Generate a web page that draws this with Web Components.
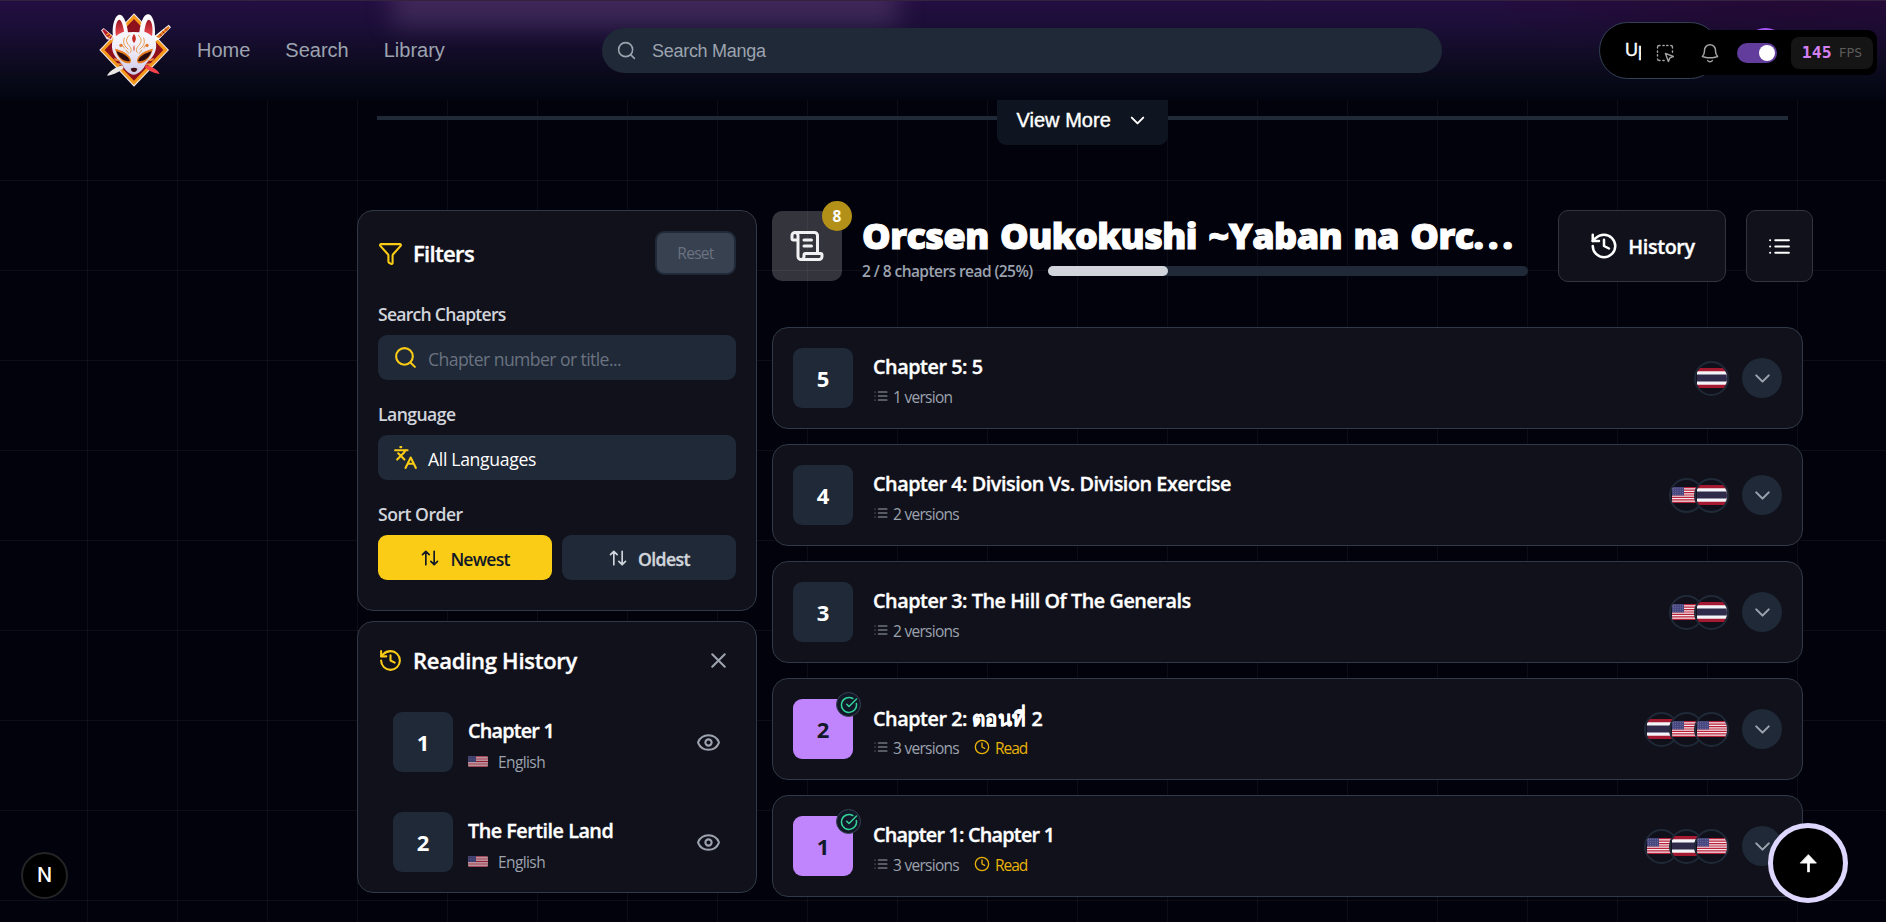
<!DOCTYPE html>
<html lang="en">
<head>
<meta charset="utf-8">
<title>Manga chapters</title>
<style>
  html, body { margin: 0; height: 100%; overflow: hidden; background: #02020d; }
  body { font-family: "Open Sans", "Noto Sans", sans-serif; color: #fff; }
</style>
</head>
<body>
<manga-page></manga-page>
<script>
const ICONS = {
  search: '<circle cx="11" cy="11" r="8"/><path d="m21 21-4.3-4.3"/>',
  down: '<path d="m6 9 6 6 6-6"/>',
  funnel: '<path d="M10 20a1 1 0 0 0 .553.895l2 1A1 1 0 0 0 14 21v-7a2 2 0 0 1 .517-1.341L21.74 4.67A1 1 0 0 0 21 3H3a1 1 0 0 0-.742 1.67l7.225 7.989A2 2 0 0 1 10 14z"/>',
  languages: '<path d="m5 8 6 6M4 14l6-6 2-3M2 5h12M7 2h1m14 20-5-10-5 10M14 18h6"/>',
  sort: '<path d="m21 16-4 4-4-4M17 20V4M3 8l4-4 4 4M7 4v16"/>',
  history: '<path d="M3 12a9 9 0 1 0 9-9 9.75 9.75 0 0 0-6.74 2.74L3 8"/><path d="M3 3v5h5M12 7v5l4 2"/>',
  close: '<path d="M18 6 6 18M6 6l12 12"/>',
  eye: '<path d="M2.062 12.348a1 1 0 0 1 0-.696 10.75 10.75 0 0 1 19.876 0 1 1 0 0 1 0 .696 10.75 10.75 0 0 1-19.876 0"/><circle cx="12" cy="12" r="3"/>',
  scroll: '<path d="M15 12h-5M15 8h-5M19 17V5a2 2 0 0 0-2-2H4M8 21h12a2 2 0 0 0 2-2v-1a1 1 0 0 0-1-1H11a1 1 0 0 0-1 1v1a2 2 0 1 1-4 0V5a2 2 0 1 0-4 0v2a1 1 0 0 0 1 1h3"/>',
  list: '<path d="M3 6h.01M3 12h.01M3 18h.01M8 6h13M8 12h13M8 18h13"/>',
  clock: '<circle cx="12" cy="12" r="10"/><path d="M12 6v6l4 2"/>',
  check: '<path d="M21.801 10A10 10 0 1 1 17 3.335"/><path d="m9 11 3 3L22 4"/>',
  top: '<path d="M12 1 22 11.500H2Z" fill="currentColor" stroke-width="1"/><path d="M12 8v15" stroke-width="3.400" stroke-linecap="butt"/>',
  bell: '<path d="M14.857 17.082a23.848 23.848 0 0 0 5.454-1.310A8.967 8.967 0 0 1 18 9.750V9A6 6 0 0 0 6 9v.75a8.967 8.967 0 0 1-2.312 6.022c1.733.640 3.560 1.085 5.455 1.310m5.714 0a24.255 24.255 0 0 1-5.714 0"/><path d="M9.500 20.300c1.200 1.700 3.800 1.700 5 0"/>',
  inspect: '<path d="M3 6V5a2 2 0 0 1 2-2h1M9.500 3h1.500M14 3h1.500M19 3a2 2 0 0 1 2 2v1M3 9.500V11M3 14v1.500M3 19a2 2 0 0 0 2 2h1M9.500 21H11M21 9.500V11"/><path d="m12.500 12.500 9.500 3.700-4.200 1.700-1.700 4.200z"/>'
};

const LOGO = `
<svg viewBox="0 0 252 252" width="84" height="84" aria-hidden="true">
  <defs>
    <linearGradient id="face" x1="0" y1="0" x2="0" y2="1"><stop offset="0" stop-color="#fff"/><stop offset=".55" stop-color="#f1eefa"/><stop offset="1" stop-color="#cfcbe8"/></linearGradient>
    <linearGradient id="ear" x1="0" y1="0" x2="0" y2="1"><stop offset="0" stop-color="#9c1522"/><stop offset="1" stop-color="#ef4a50"/></linearGradient>
  </defs>
  <path d="M120 16 225 126 120 236 16 126Z" fill="#f4e9f0"/>
  <path d="M120 20 221 126 120 231 20 126Z" fill="#f59a18"/>
  <path d="M120 33 208 126 120 218 32 126Z" fill="#8e101d"/>
  <path d="M21 67 29 60 58 84 54 97 38 94Z" fill="#f3dfe4"/>
  <path d="M25 67 30 63 54 85 50 94 36 84Z" fill="#b51a2c"/>
  <path d="m37 82 9-7M43 89l9-8" stroke="#f5a31e" stroke-width="4"/>
  <path d="m224 50 7 8-34 34-16 10-4-14Z" fill="#fff"/>
  <path d="m223 54 5 5-32 31-10-3Z" fill="#e47718"/>
  <path d="m213 62 6 6M205 70l6 6M197 78l6 6" stroke="#8e2414" stroke-width="3"/>
  <path d="M40 201c8-12 22-22 45-29l4 8c-12 10-28 20-49 23Z" fill="#e9e6e4"/>
  <path d="M197 198c-6-13-22-21-42-27l-2 7c11 10 23 17 44 20Z" fill="#f4434b"/>
  <path d="M58 92C53 65 58 37 68 25c7-9 17-5 23 8 6 11 9 26 11 40q17-2 34 0c2-16 6-34 13-45 6-10 16-13 23-4 10 14 13 41 10 68 8 18 5 36-5 52-9 13-17 17-23 27-5 12-15 22-25 26-7 4-13 4-20 0-10-4-18-14-24-26-6-10-15-15-22-27-10-16-12-35-5-52Z" fill="url(#face)"/>
  <path d="M66 84c-4-24 1-46 9-49 7-1 13 18 15 36-9 3-17 7-24 13ZM174 84c4-24 0-46-9-49-7-1-12 18-14 36 9 3 16 7 23 13Z" fill="url(#ear)"/>
  <g fill="none" stroke="#e5943c" stroke-width="2.800" stroke-linecap="round">
    <path d="M106 82c-16 14-6 25 1 33 5 6 6 12 3 18M133 82c16 14 6 25-1 33-5 6-6 12-3 18M91 90c-6 15 1 25 11 33M149 90c6 15-1 25-11 33"/>
    <path d="M81 116c6-5 9-1 9 4M159 116c-6-5-9-1-9 4M96 126l8 10M144 126l-8 10"/>
  </g>
  <path d="M120 78c8 11 7 18 0 27-7-9-8-16 0-27Z" fill="#c72a24"/><path d="M120 110c3 8 2 15 0 21-2-6-3-13 0-21Z" fill="#d8472b"/>
  <circle cx="81" cy="112" r="5" fill="#e0772d"/><circle cx="159" cy="112" r="5" fill="#e0772d"/>
  <path d="M63 122c18 4 41 14 47 30 2 7 1 10-3 14-15 1-35-9-44-44ZM177 122c-18 4-41 14-47 30-2 7-1 10 3 14 15 1 35-9 44-44Z" fill="#e57c20"/>
  <path d="M67 130c19 6 37 14 41 29-16 3-33-7-41-29ZM173 130c-19 6-37 14-41 29 16 3 33-7 41-29Z" fill="#2a0c10"/>
  <path d="M60 150c9 2 15 5 21 10-9 0-15-1-19-3M180 150c-9 2-15 5-21 10 9 0 15-1 19-3M68 166c7-1 13 0 19 3-6 3-11 3-15 2M172 166c-7-1-13 0-19 3 6 3 11 3 15 2" fill="#e8863a"/>
  <path d="M110 182c6-4 14-4 20 0-1 6-5 10-10 10s-9-4-10-10Z" fill="#431015"/>
</svg>`;

function define(name, css, html) {
  customElements.define(name, class extends HTMLElement {
    connectedCallback() {
      if (this.shadowRoot) return;
      const t = document.createElement('template');
      t.innerHTML = `<style>*{box-sizing:border-box}${css}</style>` + (typeof html === 'function' ? html(this) : html);
      this.attachShadow({ mode: 'open' }).append(t.content.cloneNode(true));
    }
  });
}
const at = (el, n, d = '') => el.getAttribute(n) ?? d;

define('ui-icon', ':host{display:block;flex:none}svg{display:block}', el => {
  const s = at(el, 'size', 24);
  return `<svg width="${s}" height="${s}" viewBox="0 0 24 24" fill="none" stroke="currentColor" stroke-width="${at(el, 'weight', 2)}" stroke-linecap="round" stroke-linejoin="round">${ICONS[at(el, 'name')]}</svg>`;
});

/* one run of text: size, weight and tracking come from attributes; "firm" thickens a semibold slightly */
define('ui-text', ':host{display:block;white-space:nowrap;flex:none}:host([firm]){-webkit-text-stroke:.35px currentColor}', el => {
  const s = at(el, 'size', 18);
  return `<style>:host{font-size:${s}px;font-weight:${at(el, 'weight', 400)};letter-spacing:${at(el, 'track', 0)}px;line-height:${at(el, 'line', 24)}px}</style><slot></slot>`;
});

define('flag-art', ':host{display:block;overflow:hidden}svg{display:block;width:100%;height:100%}', el => {
  if (at(el, 'country') === 'th')
    return '<svg viewBox="0 0 30 20" preserveAspectRatio="none"><path fill="#a51931" d="M0 0h30v20H0z"/><path fill="#f4f5f8" d="M0 3.300h30v13.400H0z"/><path fill="#2d2a4a" d="M0 6.500h30v7H0z"/></svg>';
  let s = '';
  for (let i = 0; i < 7; i++) s += `<path fill="#b8203a" d="M0 ${(i * 16 * 2 / 13).toFixed(2)}h30v1.230H0z"/>`;
  let stars = '';
  for (let y = 0; y < 4; y++) for (let x = 0; x < 5; x++) stars += `<circle cx="${1.3 + x * 2.3}" cy="${1.2 + y * 2}" r=".42" fill="#aaa8cf"/>`;
  return `<svg viewBox="0 0 30 16" preserveAspectRatio="none"><path fill="#f6e6e9" d="M0 0h30v16H0z"/>${s}<path fill="#46467f" d="M0 0h12v8.600H0z"/>${stars}</svg>`;
});

define('flag-chip', `
  :host{display:grid;place-items:center;width:35px;height:35px;border-radius:50%;border:2px solid #1f2937;background:#10101a;overflow:hidden;flex:none}
  flag-art{width:30px}`,
  el => `<flag-art country="${at(el, 'country')}" style="height:${at(el, 'country') === 'th' ? 20 : 16}px"></flag-art>`);

define('number-tile', `
  :host{display:grid;place-items:center;position:relative;width:60px;height:60px;border-radius:9px;background:#1f2937;flex:none;font-size:22px;font-weight:700;line-height:60px;color:#fff}
  :host([read]){background:#c084fc;color:#111827}
  .b{position:absolute;top:-7px;right:-8px;width:25px;height:25px;border-radius:50%;border:1px solid #374151;background:#111827;display:grid;place-items:center;color:#34d399}`,
  el => '<slot></slot>' + (el.hasAttribute('read') ? '<span class="b"><ui-icon name="check" size="18"></ui-icon></span>' : ''));

define('dev-bar', `
  :host{position:absolute;left:1641px;top:30px;width:236px;height:45px;background:#000;border-radius:0 9px 9px 0;display:flex;align-items:center;padding:0 4px 0 14px;color:#a3a3a3}
  .bell{margin-left:24px}
  .sw{width:40px;height:20px;border-radius:10px;background:#623d9b;margin-left:16px;display:flex;justify-content:flex-end;align-items:center;padding-right:2px}
  .sw i{width:16px;height:16px;border-radius:50%;background:#fff}
  .fps{width:82px;height:32px;border-radius:8px;background:#151515;margin-left:auto;display:flex;align-items:center;justify-content:center;gap:7px;font-family:"DejaVu Sans Mono","Liberation Mono",monospace}
  .n{font-size:16.500px;font-weight:700;color:#d580f2;line-height:30px}.u{font-size:13px;color:#5c5c5c;line-height:30px}`,
  `<ui-icon name="inspect" size="20" weight="1.700"></ui-icon><ui-icon class="bell" name="bell" size="22" weight="1.600"></ui-icon>
   <span class="sw"><i></i></span><span class="fps"><span class="n">145</span><span class="u">FPS</span></span>`);

define('site-header', `
  :host{display:flex;align-items:center;position:absolute;inset:0 0 auto 0;height:100px;overflow:hidden;padding-left:94px;z-index:2;
    font-family:"Liberation Sans",Arial,sans-serif;
    background:radial-gradient(ellipse 330px 70px at 1800px 0,rgba(38,0,30,.35),transparent),linear-gradient(#240e42 0,#1a0e36 28%,#110c25 55%,#080919 78%,#020510 100%);border-top:1px solid #33233f}
  .glow{position:absolute;left:392px;top:-30px;width:506px;height:56px;background:rgba(105,78,125,.4);filter:blur(12px)}
  .logo{position:relative;margin-top:-1px}
  .logo svg{display:block}
  nav{position:relative;display:flex;gap:35px;margin-left:19px;color:#9ca3af;margin-top:-1px}
  .search{position:absolute;left:602px;top:27px;width:840px;height:45px;border-radius:23px;background:#1f2937;display:flex;align-items:center;padding-left:14px;gap:15px;color:#9ca3af}
  .account{position:absolute;left:1599px;top:21px;width:120px;height:57px;border-radius:29px;background:#000;border:1px solid #334155;padding:15px 0 0 25px;color:#fff;-webkit-text-stroke:.35px #fff}
  .avatar{position:absolute;left:1743px;top:27px;width:45px;height:45px;border-radius:50%;background:#a855f7}
  dev-bar{top:29px}`,
  `<div class="glow"></div><div class="logo">${LOGO}</div>
   <nav><ui-text size="20">Home</ui-text><ui-text size="20">Search</ui-text><ui-text size="20">Library</ui-text></nav>
   <div class="search"><ui-icon name="search" size="21" weight="1.800"></ui-icon><ui-text size="18" track="-0.280">Search Manga</ui-text></div>
   <div class="account"><ui-text size="18">Up</ui-text></div><div class="avatar"></div>
   <dev-bar></dev-bar>`);

define('view-more', `
  :host{display:grid;grid-template-columns:1fr 171px 1fr;width:1411px;margin-left:377px;height:45px}
  i{height:4px;background:#1f2937;margin-top:16px}
  .b{background:#0e1520;border-radius:0 0 9px 9px;display:flex;align-items:center;gap:15px;padding:0 0 5px 19.500px;font-family:"Liberation Sans",Arial,sans-serif;-webkit-text-stroke:.4px #fff}`,
  `<i></i><div class="b"><ui-text size="20" track="0.020"><slot></slot></ui-text><ui-icon name="down" size="23"></ui-icon></div><i></i>`);

define('side-card', `:host{display:block;border:1px solid #2f3947;border-radius:16px;background:#11111b;padding:20px;overflow:hidden}`, '<slot></slot>');

define('filter-panel', `
  :host{display:block}side-card{height:401px}
  .h{display:flex;align-items:center;height:44px;color:#facc15;margin-bottom:25px}
  .h>ui-text{color:#fff;margin-left:10px}
  .r{margin-left:auto;width:81px;height:44px;border:2px solid #1f2937;border-radius:9px;background:#384150;color:#6b7280;display:grid;place-items:center}
  .l{color:#d1d5db;margin-bottom:7px;padding-top:1px}
  .f{height:45px;border-radius:9px;background:#1f2937;display:flex;align-items:center;gap:10px;padding-left:15px;color:#facc15;margin-bottom:20px}
  .f ui-text{color:#6b7280;padding-top:2px}.f .v{color:#fff}
  .s{display:grid;grid-template-columns:1fr 1fr;gap:10px}
  .s div{height:45px;border-radius:9px;display:flex;align-items:center;justify-content:center;gap:10px;background:#1f2937;color:#d1d5db}
  .s ui-text{padding-top:2px}
  .s .on{background:#facc15;color:#111827}`,
  `<side-card>
    <div class="h"><ui-icon name="funnel" size="25"></ui-icon><ui-text firm size="22" weight="600" track="-0.650">Filters</ui-text><div class="r"><ui-text size="15.500" track="-0.700">Reset</ui-text></div></div>
    <ui-text class="l" size="17.600" weight="600" track="-0.750" line="27">Search Chapters</ui-text>
    <div class="f"><ui-icon name="search" size="25"></ui-icon><ui-text size="17.600" track="-0.580">Chapter number or title...</ui-text></div>
    <ui-text class="l" size="17.600" weight="600" track="-0.550" line="27">Language</ui-text>
    <div class="f"><ui-icon name="languages" size="25"></ui-icon><ui-text class="v" size="17.600" track="-0.320">All Languages</ui-text></div>
    <ui-text class="l" size="17.600" weight="600" track="-0.500" line="27">Sort Order</ui-text>
    <div class="s"><div class="on"><ui-icon name="sort" size="20"></ui-icon><ui-text size="17.600" weight="600" track="-0.780">Newest</ui-text></div><div><ui-icon name="sort" size="20"></ui-icon><ui-text firm size="17.600" weight="600" track="-0.560">Oldest</ui-text></div></div>
  </side-card>`);

define('history-item', `
  :host{display:flex;align-items:center;height:90px;padding:0 15px 0 15px;gap:15px}
  .t{padding-top:9px}.s{display:flex;align-items:center;gap:10px;color:#9ca3af;height:32px}
  flag-art{width:20px;height:11px;border-radius:2px;opacity:.8;margin-top:-1px}
  .e{margin-left:auto;color:#9ca3af}`,
  el => `<number-tile>${at(el, 'n')}</number-tile>
  <div class="t"><ui-text firm size="19.800" weight="600" track="${at(el, 'track')}" line="30"><slot></slot></ui-text><div class="s"><flag-art country="us"></flag-art><ui-text size="15.500" track="-0.600">English</ui-text></div></div>
  <ui-icon class="e" name="eye" size="25"></ui-icon>`);

define('history-panel', `
  :host{display:block}side-card{height:272px}
  .h{display:flex;align-items:center;height:36px;color:#facc15;margin-bottom:19px}
  .h ui-text{color:#fff;margin-left:10px}.h .x{margin-left:auto;margin-right:5px;color:#9ca3af}
  history-item+history-item{margin-top:10px}`,
  `<side-card><div class="h"><ui-icon name="history" size="25"></ui-icon><ui-text firm size="22" weight="600" track="-0.260">Reading History</ui-text><ui-icon class="x" name="close" size="25"></ui-icon></div>
   <history-item n="1" track="-0.800">Chapter 1</history-item><history-item n="2" track="-0.500">The Fertile Land</history-item></side-card>`);

define('series-header', `
  :host{display:flex;height:72px;align-items:flex-start}
  .i{position:relative;width:70px;height:70px;margin-top:1px;border-radius:10px;background:rgba(255,255,255,.2);display:grid;place-items:center;color:#f1f1f4}
  .i b{position:absolute;right:-10px;top:-10px;width:30px;height:30px;border-radius:50%;background:#b39118;font-size:15.500px;line-height:31px;text-align:center;color:#fff}
  .m{width:666px;margin-left:20px;height:72px}
  .m>ui-text{word-spacing:2.500px;-webkit-text-stroke:1.100px #fff;padding-top:1px}
  .dots{letter-spacing:4px}
  .p{display:flex;align-items:center;height:24px;gap:15px;color:#9ca3af;margin-top:-1px}
  .bar{flex:1;height:10px;border-radius:5px;background:#1f2937;margin-top:-1px}
  .bar i{display:block;width:25%;height:10px;border-radius:5px;background:#d1d5db}
  .btn{height:72px;border:1px solid #33343e;border-radius:10px;background:#11111b;display:flex;align-items:center;justify-content:center}
  .a{width:168px;margin-left:30px;gap:9px}.a ui-text{padding-top:2px}.c{width:67px;margin-left:20px}`,
  `<div class="i"><ui-icon name="scroll" size="36"></ui-icon><b>8</b></div>
   <div class="m"><ui-text size="36" weight="900" track="-0.540" line="49"><slot></slot><span class="dots">...</span></ui-text>
   <div class="p"><ui-text size="15.500" weight="600" track="-0.560">2 / 8 chapters read (25%)</ui-text><div class="bar"><i></i></div></div></div>
   <div class="btn a"><ui-icon name="history" size="30"></ui-icon><ui-text firm size="19.800" weight="600" track="-0.380">History</ui-text></div>
   <div class="btn c"><ui-icon name="list" size="25"></ui-icon></div>`);

define('chapter-row', `
  :host{display:flex;align-items:center;height:102px;width:1031px;border:1px solid #2f3947;border-radius:16px;background:#11111b;padding:0 20px}
  .t{margin-left:20px;padding-top:7px}.s{display:flex;align-items:center;height:29px;color:#9ca3af}
  .s .v{margin-left:4px}.s .k{margin-left:15px;color:#eab308}.s .r{margin-left:5px;color:#eab308}.s ui-icon{margin-top:-2px}
  .f{margin-left:auto;display:flex}flag-chip+flag-chip{margin-left:-10px}
  .d{width:40px;height:40px;border-radius:50%;background:#1f2937;margin-left:13px;display:grid;place-items:center;color:#9ca3af}`,
  el => {
    const flags = at(el, 'flags').split(' '), n = flags.length === 1 ? '1 version' : at(el, 'versions') + ' versions', read = el.hasAttribute('read');
    return `<number-tile ${read ? 'read' : ''}>${at(el, 'n')}</number-tile>
    <div class="t"><ui-text firm size="19.800" weight="600" track="${at(el, 'track', '-0.450')}" line="30"><slot></slot></ui-text>
    <div class="s"><ui-icon name="list" size="16" weight="1.600"></ui-icon><ui-text class="v" size="15.500" track="-0.720">${n}</ui-text>
    ${read ? '<ui-icon class="k" name="clock" size="16"></ui-icon><ui-text class="r" size="15.500" weight="500" track="-1.050">Read</ui-text>' : ''}</div></div>
    <div class="f">${flags.map(c => `<flag-chip country="${c}"></flag-chip>`).join('')}</div><div class="d"><ui-icon name="down" size="25"></ui-icon></div>`;
  });

define('chapter-list', ':host{display:grid;gap:15px}', '<slot></slot>');

define('round-button', `
  :host{display:grid;place-items:center;position:absolute;border-radius:50%;background:#000;color:#fff}
  :host([kind=top]){left:1768px;top:823px;width:80px;height:80px;border:5px solid #ddd6fe}
  :host([kind=dev]){left:21px;top:852px;width:47px;height:47px;border:2px solid #242426;font:500 20px/43px Inter,sans-serif}`, '<slot></slot>');

define('manga-page', `
  :host{display:block;position:relative;width:1886px;height:922px;overflow:hidden;
    background:
    linear-gradient(90deg,rgba(255,255,255,.045) 1px,transparent 1px) 87px 0/90px 90px,
    linear-gradient(rgba(255,255,255,.045) 1px,transparent 1px) 0 0/90px 90px,#02020d}
  main{padding-top:100px}
  .cols{display:grid;grid-template-columns:400px 1041px;gap:15px;margin:65px 0 0 357px}
  aside{display:grid;gap:10px;align-content:start}
  series-header{margin-bottom:45px}
  .th{font-size:20.500px;letter-spacing:.5px}`,
  `<site-header></site-header>
  <main><view-more>View More</view-more>
   <div class="cols"><aside><filter-panel></filter-panel><history-panel></history-panel></aside>
    <section><series-header>Orcsen Oukokushi ~Yaban na Orc</series-header>
     <chapter-list>
      <chapter-row n="5" flags="th">Chapter 5: 5</chapter-row>
      <chapter-row n="4" flags="us th" versions="2">Chapter 4: Division Vs. Division Exercise</chapter-row>
      <chapter-row n="3" flags="us th" versions="2">Chapter 3: The Hill Of The Generals</chapter-row>
      <chapter-row n="2" flags="th us us" versions="3" read>Chapter 2: <span class="th">ตอนที่</span> 2</chapter-row>
      <chapter-row n="1" flags="us th us" versions="3" read track="-0.780">Chapter 1: Chapter 1</chapter-row>
     </chapter-list></section></div></main>
  <round-button kind="dev">N</round-button>
  <round-button kind="top"><ui-icon name="top" size="19"></ui-icon></round-button>`);
</script>
</body>
</html>
